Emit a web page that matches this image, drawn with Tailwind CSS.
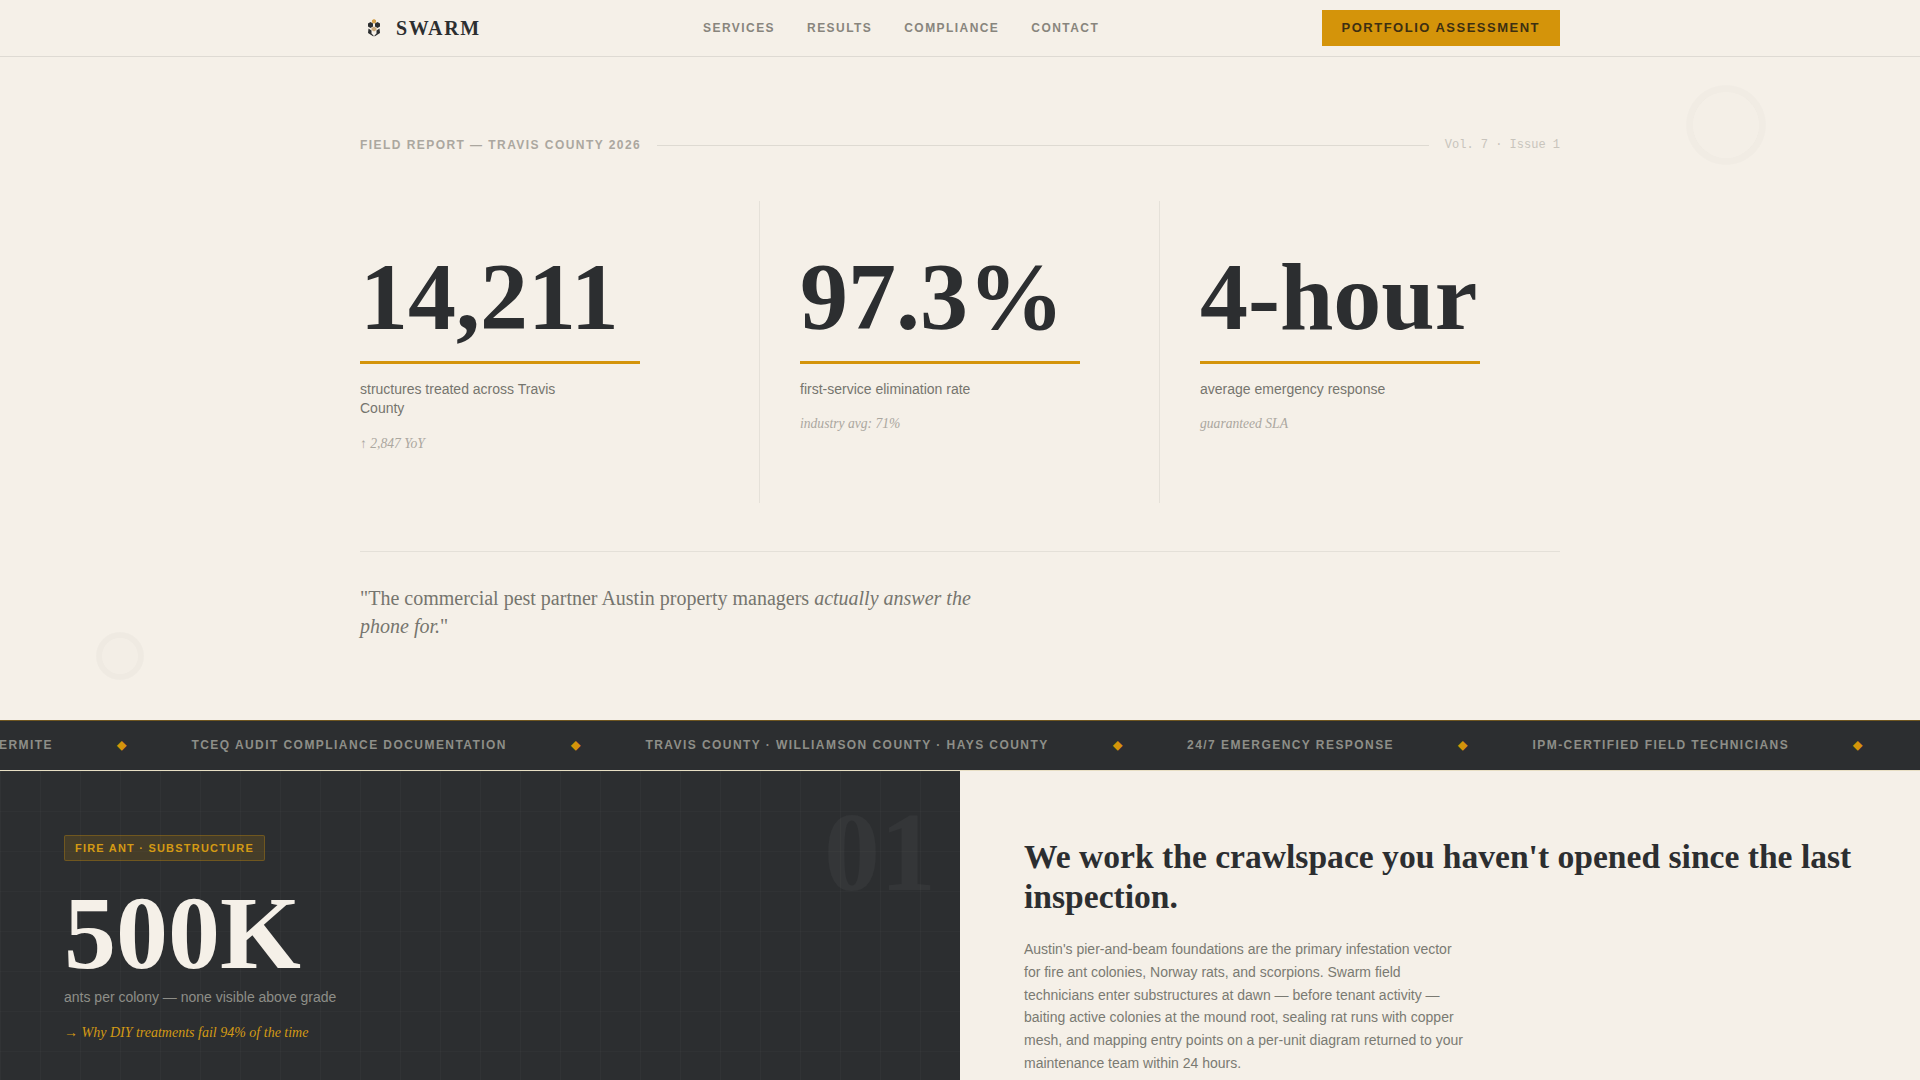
<!DOCTYPE html>
<html lang="en">
<head>
    <meta charset="UTF-8">
    <meta name="viewport" content="width=device-width, initial-scale=1.0">
    <title>Swarm - Field Report</title>
    <script src="https://cdn.jsdelivr.net/npm/@tailwindcss/browser@4"></script>
</head>
<body class="bg-[#f5f0e8] text-[#2c2e30] font-['Liberation_Sans',sans-serif] h-screen overflow-hidden">
    <!-- Nav -->
    <header class="h-[57px] border-b border-[#dedad3]">
        <div class="w-[1200px] mx-auto h-full flex justify-between items-center">
            <div class="flex items-center gap-3">
                <svg class="w-[24px] h-[24px]" viewBox="-2 0 24 24">
                    <path d="M12 3l2 1.200v2.300l-2 1.200-2-1.200V4.200z" fill="#d4a04a"/>
                    <path d="M8.500 6l2.500 1.500v3L8.500 12 6 10.500v-3z" fill="#2c2e30"/>
                    <path d="M15.500 6L18 7.500v3L15.500 12 13 10.500v-3z" fill="#2c2e30"/>
                    <path d="M12 10.500l2.500 1.500v2L12 15.500 9.500 14v-2z" fill="#c9a77a"/>
                    <path d="M6.500 12.500l3 2v3l2 2v1l-5.500-3.500z" fill="#2c2e30"/>
                    <path d="M17.500 12.500l-3 2v3l-2 2v1l5.500-3.500z" fill="#2c2e30"/>
                </svg>
                <span class="font-['Liberation_Serif',serif] font-bold text-[20px] tracking-[0.08em]">SWARM</span>
            </div>
            <nav class="flex gap-8 text-[12px] font-bold tracking-[0.12em] text-[#88857d]">
                <a href="#">SERVICES</a>
                <a href="#">RESULTS</a>
                <a href="#">COMPLIANCE</a>
                <a href="#">CONTACT</a>
            </nav>
            <a href="#" class="h-[36px] px-5 flex items-center bg-[#d4940a] text-[#3d2f12] text-[13px] font-bold tracking-[0.115em]">PORTFOLIO ASSESSMENT</a>
        </div>
    </header>

    <!-- Hero -->
    <section class="relative h-[663px]">
        <div class="absolute left-[1686px] top-[28px] w-[80px] h-[80px] rounded-full border-[7px] border-[#2c2e30]/[0.02] bg-[#2c2e30]/[0.005]"></div>
        <div class="absolute left-[96px] top-[575px] w-[48px] h-[48px] rounded-full border-[6px] border-[#2c2e30]/[0.02] bg-[#2c2e30]/[0.01]"></div>
        <div class="w-[1200px] mx-auto pt-[79px]">
            <div class="flex items-center gap-4">
                <span class="text-[12px] font-bold tracking-[0.12em] text-[#aba79f]">FIELD REPORT — TRAVIS COUNTY 2026</span>
                <div class="flex-1 h-px bg-[#dedad2]"></div>
                <span class="font-['Liberation_Mono',monospace] text-[12px] text-[#c8c4bc]">Vol. 7 · Issue 1</span>
            </div>
            <div class="grid grid-cols-3 mt-[47px] h-[302px]">
                <div class="border-r border-[#e5e1d9] pt-[48px]">
                    <div class="w-[280px]">
                        <div class="font-['Liberation_Serif',serif] font-bold text-[96px] leading-none pb-4 border-b-[3px] border-[#d4940a]">14,211</div>
                        <p class="text-[14px] leading-[19px] text-[#75756e] mt-[16px] w-[220px]">structures treated across Travis County</p>
                        <p class="font-['Liberation_Serif',serif] italic text-[13.6px] text-[#aba79f] mt-[16px]">↑ 2,847 YoY</p>
                    </div>
                </div>
                <div class="border-r border-[#e5e1d9] pt-[48px] pl-[40px]">
                    <div class="w-[280px]">
                        <div class="font-['Liberation_Serif',serif] font-bold text-[96px] leading-none pb-4 border-b-[3px] border-[#d4940a]">97.3%</div>
                        <p class="text-[14px] leading-[19px] text-[#75756e] mt-[16px]">first-service elimination rate</p>
                        <p class="font-['Liberation_Serif',serif] italic text-[13.6px] text-[#aba79f] mt-[15px]">industry avg: 71%</p>
                    </div>
                </div>
                <div class="pt-[48px] pl-[40px]">
                    <div class="w-[280px]">
                        <div class="font-['Liberation_Serif',serif] font-bold text-[96px] leading-none pb-4 border-b-[3px] border-[#d4940a] whitespace-nowrap">4-hour</div>
                        <p class="text-[14px] leading-[19px] text-[#75756e] mt-[16px]">average emergency response</p>
                        <p class="font-['Liberation_Serif',serif] italic text-[13.6px] text-[#aba79f] mt-[15px]">guaranteed SLA</p>
                    </div>
                </div>
            </div>
            <div class="mt-[48px] border-t border-[#e4e0d8] pt-[32px]">
                <p class="font-['Liberation_Serif',serif] text-[20px] leading-[28px] text-[#75756e] w-[640px]">"The commercial pest partner Austin property managers <em>actually answer the phone for.</em>"</p>
            </div>
        </div>
    </section>

    <!-- Ticker -->
    <div class="h-[51px] bg-[#2c2e30] border-t border-[#d4940a]/40 border-b border-b-[#e8dfc4] overflow-hidden flex items-center pb-[2px]">
        <div class="flex items-center gap-16 whitespace-nowrap -ml-[11px] text-[12px] font-bold tracking-[0.12em] text-[#8e8e88]">
            <span class="w-[64px] overflow-hidden flex justify-end">TERMITE</span>
            <span class="text-[#d4940a] text-[12px]">◆</span>
            <span>TCEQ AUDIT COMPLIANCE DOCUMENTATION</span>
            <span class="text-[#d4940a] text-[12px]">◆</span>
            <span>TRAVIS COUNTY · WILLIAMSON COUNTY · HAYS COUNTY</span>
            <span class="text-[#d4940a] text-[12px]">◆</span>
            <span>24/7 EMERGENCY RESPONSE</span>
            <span class="text-[#d4940a] text-[12px]">◆</span>
            <span>IPM-CERTIFIED FIELD TECHNICIANS</span>
            <span class="text-[#d4940a] text-[12px]">◆</span>
        </div>
    </div>

    <!-- Case split -->
    <section class="grid grid-cols-2">
        <div class="relative bg-[#2c2e30] bg-[linear-gradient(rgba(255,255,255,0.02)_1px,transparent_1px),linear-gradient(90deg,rgba(255,255,255,0.025)_1px,transparent_1px)] bg-[size:40px_40px] px-[64px] pt-[64px] h-[420px] overflow-hidden">
            <div class="absolute right-[24px] top-[25px] font-['Liberation_Serif',serif] font-bold text-[112px] leading-none text-white/[0.04]">01</div>
            <span class="inline-block h-[26px] px-[10px] leading-[24px] rounded-[2px] border border-[#d4940a]/30 bg-[#d4940a]/15 text-[#d49a14] text-[11px] font-bold tracking-[0.11em]">FIRE ANT · SUBSTRUCTURE</span>
            <div class="font-['Liberation_Serif',serif] font-bold text-[104px] leading-none text-[#f5f0e8] mt-[20px]">500K</div>
            <p class="text-[14px] text-[#8e8e88] mt-[2px]">ants per colony — none visible above grade</p>
            <p class="font-['Liberation_Serif',serif] italic text-[14px] text-[#d49a14] mt-[14px]">→ Why DIY treatments fail 94% of the time</p>
        </div>
        <div class="px-[64px] pt-[66px]">
            <h2 class="font-['Liberation_Serif',serif] font-bold text-[33.6px] leading-[40px]">We work the crawlspace you haven't opened since the last inspection.</h2>
            <p class="text-[14px] leading-[22.8px] text-[#7a7a72] mt-[21px] w-[440px]">Austin's pier-and-beam foundations are the primary infestation vector for fire ant colonies, Norway rats, and scorpions. Swarm field technicians enter substructures at dawn — before tenant activity — baiting active colonies at the mound root, sealing rat runs with copper mesh, and mapping entry points on a per-unit diagram returned to your maintenance team within 24 hours.</p>
        </div>
    </section>
</body>
</html>
